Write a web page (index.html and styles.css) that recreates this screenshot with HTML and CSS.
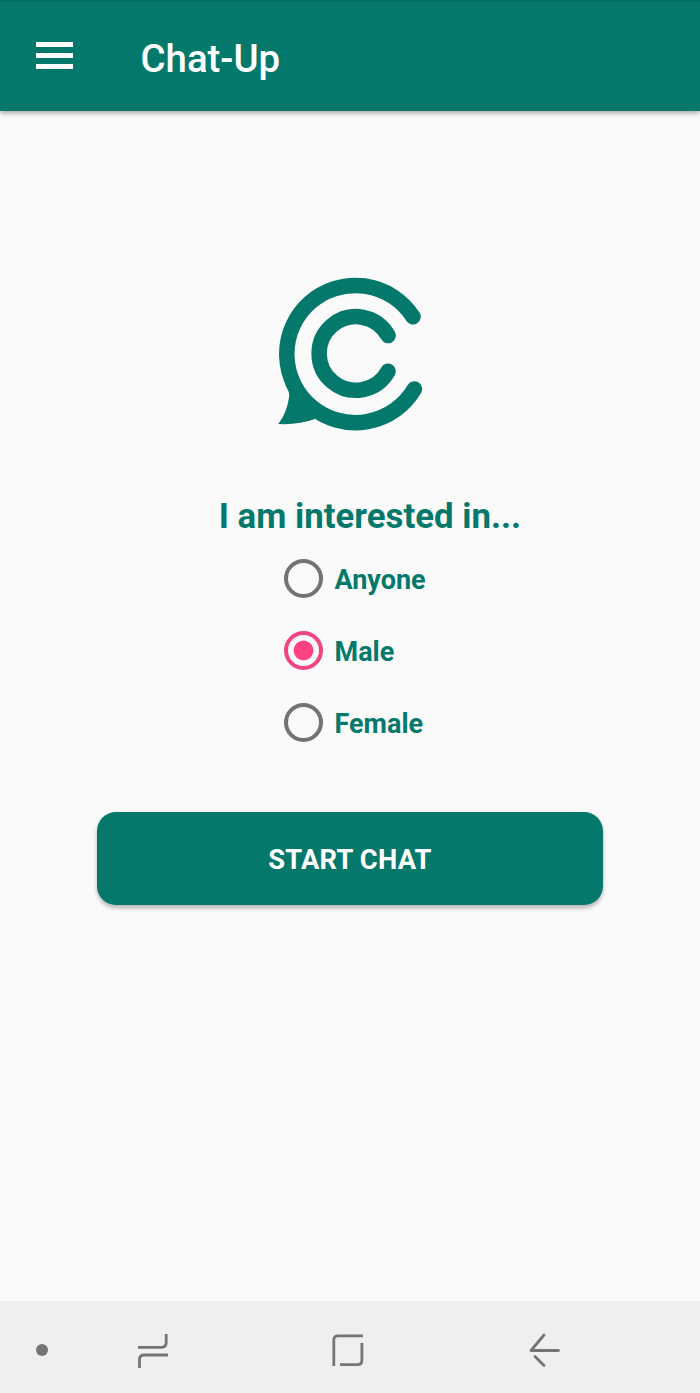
FILE: index.html
```
<!DOCTYPE html>
<html lang="en">
<head>
  <meta charset="UTF-8">
  <meta name="viewport" content="width=device-width, initial-scale=1.0">
  <title>Chat-Up</title>
  <link rel="stylesheet" href="styles.css">
</head>
<body>

<header class="toolbar">
  <button class="menu-btn" aria-label="Menu">
    <span class="bar"></span>
    <span class="bar"></span>
    <span class="bar"></span>
  </button>
  <h1 class="title">Chat-Up</h1>
</header>

<main class="content">
  <svg class="logo" viewBox="275.200 274 150 160">
    <path class="ring" d="M413.2 316.8A68.6 68.6 0 1 0 414.6 389"/>
    <path class="ring" d="M388.3 335.6A36.8 36.8 0 1 0 388.3 371.3"/>
    <path class="tail" d="M285 384C288.500 390 290 393 289.300 397Q287 413 278.500 424Q299 425 316 418.800L310 400Z"/>
  </svg>

  <h2 class="question">I am interested in...</h2>

  <div class="options">
    <label class="option">
      <input type="radio" name="interest" class="radio">
      <span>Anyone</span>
    </label>
    <label class="option">
      <input type="radio" name="interest" class="radio" checked>
      <span>Male</span>
    </label>
    <label class="option">
      <input type="radio" name="interest" class="radio">
      <span>Female</span>
    </label>
  </div>

  <button class="start-btn">START CHAT</button>
</main>

<nav class="navbar">
  <span class="dot"></span>
  <svg class="nav-icon recents" viewBox="0 0 40 40">
    <path d="M5 17.300H28.500Q33.200 17.300 33.200 12.500V4M35 25H11.500Q6.500 25 6.500 29.500V38"/>
  </svg>
  <svg class="nav-icon home" viewBox="0 0 40 40">
    <path d="M5.800 36V10Q5.800 5.800 10 5.800H35M33.900 13V30.500Q33.900 34.600 29.500 34.600H12"/>
  </svg>
  <svg class="nav-icon back" viewBox="0 0 40 40">
    <path class="round" d="M34.500 20.500H7L20 5M11 26.500L20 35.500"/>
  </svg>
</nav>

</body>
</html>
```
FILE: styles.css
```
* {
  box-sizing: border-box;
}
body {
  display: flex;
  flex-direction: column;
  height: 1393px;
  margin: 0;
  font-family: Roboto, sans-serif;
  background-color: #fafafa;
  color: #04796b;
}
button {
  border: none;
  font-family: inherit;
  cursor: pointer;
}
.toolbar {
  display: flex;
  align-items: center;
  height: 111px;
  padding: 5px 36px 0;
  border-top: 2px solid #006e61;
  background-color: #04796b;
  box-shadow: 0 2px 5px rgba(0, 0, 0, 0.35);
}
.menu-btn {
  display: flex;
  flex-direction: column;
  gap: 6.500px;
  width: 37px;
  margin-bottom: 7px;
  padding: 0;
  background: none;
}
.bar {
  height: 4.400px;
  background-color: #fff;
}
.title {
  margin: 0 0 2px 67.500px;
  font-size: 38.400px;
  font-weight: 500;
  color: #fff;
}
.content {
  display: flex;
  flex: 1;
  flex-direction: column;
  align-items: center;
  padding-top: 163px;
}
.logo {
  width: 150px;
  height: 160px;
}
.ring {
  fill: none;
  stroke: #04796b;
  stroke-width: 15.500px;
  stroke-linecap: round;
}
.tail {
  fill: #04796b;
}
.question {
  margin: 60px 0 0 40px;
  font-size: 34.800px;
  font-weight: 700;
  line-height: 44px;
}
.options {
  width: 150px;
  margin: 4px 0 0 18px;
}
.option {
  display: flex;
  align-items: center;
  gap: 11.500px;
  height: 72px;
  font-size: 27px;
  font-weight: 700;
}
.option span {
  padding-top: 3px;
}
.radio {
  flex: none;
  width: 39px;
  height: 39px;
  margin: 0;
  border: 4px solid #737373;
  border-radius: 50%;
  appearance: none;
}
.radio:checked {
  border-color: #f04585;
  background: radial-gradient(circle, #ff4081 9.300px, transparent 10.300px);
}
.start-btn {
  width: 506px;
  height: 93px;
  margin-top: 54px;
  padding-top: 3px;
  border-radius: 19px;
  background-color: #04796b;
  box-shadow: 0 3px 4px rgba(0, 0, 0, 0.28);
  font-size: 27.300px;
  font-weight: 700;
  letter-spacing: 0.200px;
  color: #fff;
}
.navbar {
  display: flex;
  align-items: center;
  height: 92px;
  padding: 6px 36px 0;
  background-color: #efefef;
}
.dot {
  width: 12px;
  height: 12px;
  border-radius: 50%;
  background-color: #757575;
}
.nav-icon {
  width: 40px;
  height: 40px;
  fill: none;
  stroke: #757575;
  stroke-width: 2.800px;
}
.recents {
  margin-left: 85px;
}
.home {
  margin-left: 155px;
}
.back {
  margin-left: 156px;
}
.round {
  stroke-linecap: round;
  stroke-linejoin: round;
}
```
